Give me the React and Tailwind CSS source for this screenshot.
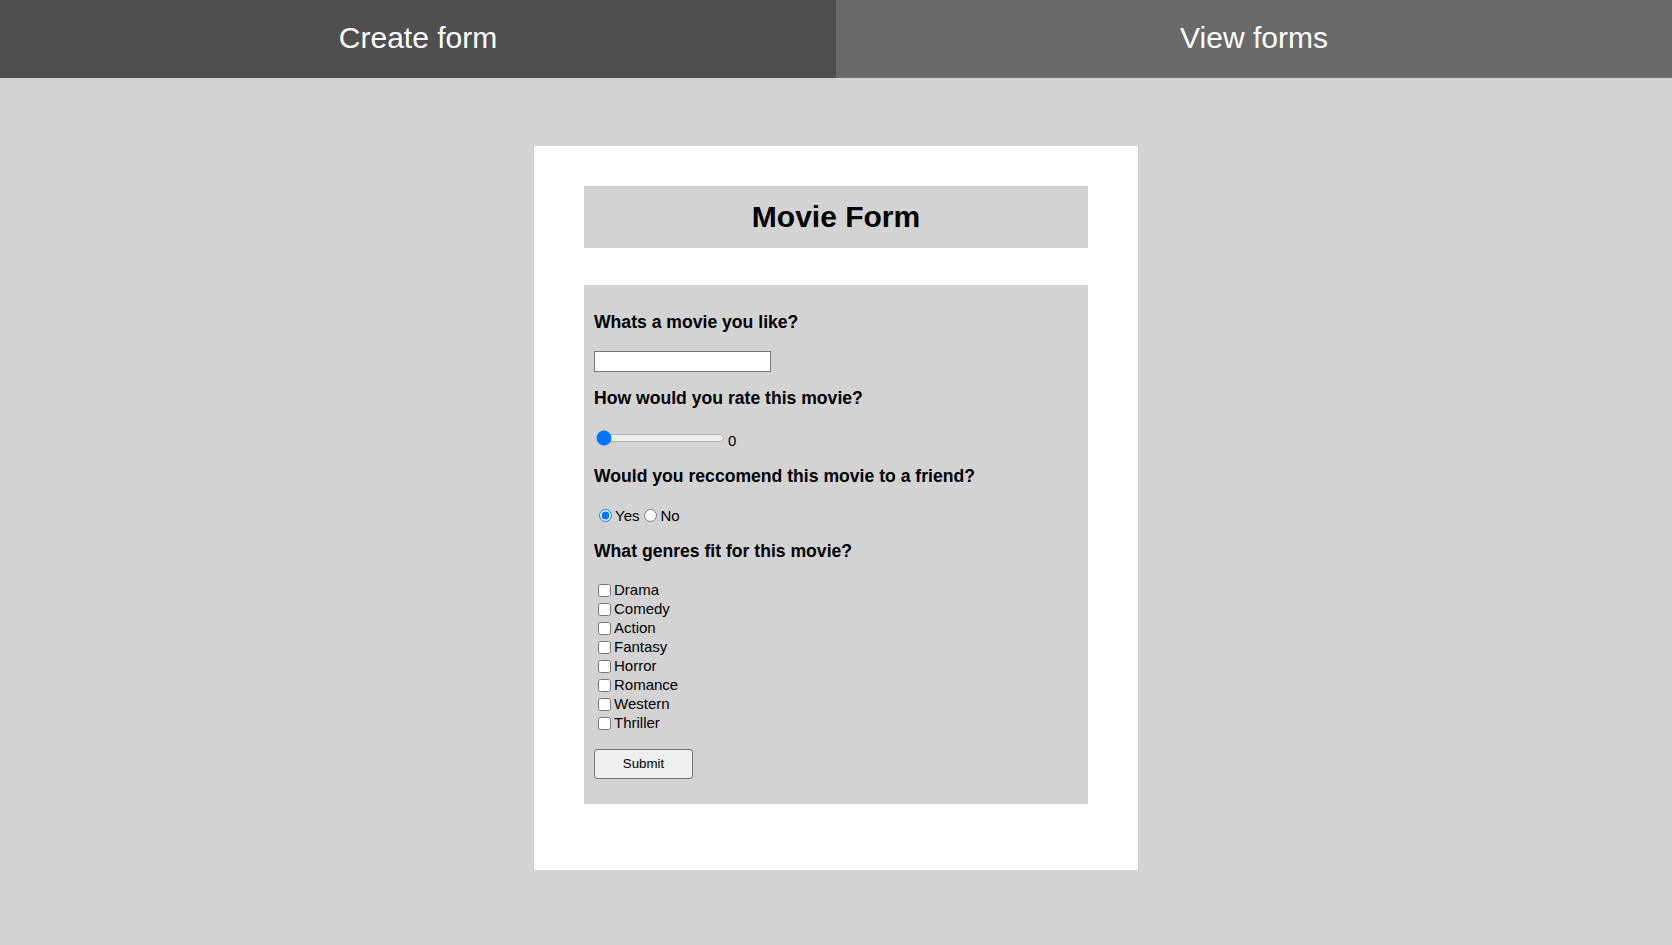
import { useState } from 'react'

const genres = ['Drama', 'Comedy', 'Action', 'Fantasy', 'Horror', 'Romance', 'Western', 'Thriller']

function App() {
  const [rating, setRating] = useState(0)
  const [recommend, setRecommend] = useState('yes')

  return (
    <div className="min-h-[945px] bg-[#d3d3d3] font-['Liberation_Sans',Arial,sans-serif] text-black">
      {/* Top nav */}
      <div className="flex h-[78px]">
        <div className="flex flex-1 items-center justify-center bg-[#4f4f4f] pb-[4px] text-[30px] text-white">
          Create form
        </div>
        <div className="flex flex-1 items-center justify-center bg-[#696969] pb-[4px] text-[30px] text-white">
          View forms
        </div>
      </div>

      <div className="mx-auto mt-[68px] w-[604px] bg-white px-[50px] pt-[40px] pb-[66px]">
        <div className="flex h-[62px] items-center justify-center bg-[#d3d3d3] pb-[2px]">
          <h1 className="text-[30px] font-bold">Movie Form</h1>
        </div>

        <form
          className="mt-[37px] bg-[#d3d3d3] px-[10px] pt-[26px] pb-[25px]"
          onSubmit={(e) => e.preventDefault()}
        >
          <h3 className="text-[17.6px] leading-[22px] font-bold">Whats a movie you like?</h3>
          <input
            type="text"
            className="mt-[18px] block h-[21px] w-[177px] border border-[#767676] bg-white px-[2px] text-[13.33px]"
          />

          <h3 className="mt-[15px] text-[17.6px] leading-[22px] font-bold">How would you rate this movie?</h3>
          <div className="mt-[18px] flex items-center">
            <input
              type="range"
              min="0"
              max="10"
              value={rating}
              onChange={(e) => setRating(e.target.value)}
              className="my-0 ml-[2px] w-[129px]"
            />
            <span className="ml-[3px] mt-[6px] text-[15px] leading-none">{rating}</span>
          </div>

          <h3 className="mt-[17px] text-[17.6px] leading-[22px] font-bold">Would you reccomend this movie to a friend?</h3>
          <div className="mt-[19px] flex items-center text-[15px] leading-[19px]">
            <input
              type="radio"
              name="rec"
              checked={recommend === 'yes'}
              onChange={() => setRecommend('yes')}
              className="mr-[3px] ml-[5px] h-[13px] w-[13px]"
            />
            <span>Yes</span>
            <input
              type="radio"
              name="rec"
              checked={recommend === 'no'}
              onChange={() => setRecommend('no')}
              className="mr-[3px] ml-[5px] h-[13px] w-[13px]"
            />
            <span>No</span>
          </div>

          <h3 className="mt-[15px] text-[17.6px] leading-[22px] font-bold">What genres fit for this movie?</h3>
          <div className="mt-[19px]">
            {genres.map((g) => (
              <label key={g} className="flex h-[19px] items-center text-[15px]">
                <input type="checkbox" className="mr-[3px] ml-[4px] h-[13px] w-[13px]" />
                <span>{g}</span>
              </label>
            ))}
          </div>

          <button
            type="submit"
            className="mt-[16px] block h-[30px] w-[99px] rounded-[3px] border border-[#767676] bg-[#efefef] text-[13.33px]"
          >
            Submit
          </button>
        </form>
      </div>
    </div>
  )
}

export default App
